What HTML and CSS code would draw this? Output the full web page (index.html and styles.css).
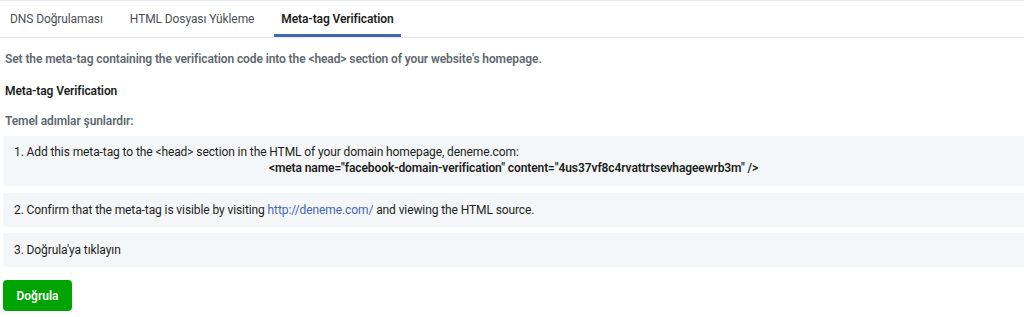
FILE: index.html
```html
<!DOCTYPE html>
<html lang="tr">
<head>
<meta charset="utf-8">
<link rel="stylesheet" href="styles.css">
</head>
<body>
<div class="page">
  <nav class="tabs">
    <div class="tab">DNS Doğrulaması</div>
    <div class="tab">HTML Dosyası Yükleme</div>
    <div class="tab active">Meta-tag Verification</div>
  </nav>
  <div class="content">
    <p class="intro">Set the meta-tag containing the verification code into the &lt;head&gt; section of your website's homepage.</p>
    <h3 class="title">Meta-tag Verification</h3>
    <p class="steps-label">Temel adımlar şunlardır:</p>
    <div class="step step-first">
      <div>1. Add this meta-tag to the &lt;head&gt; section in the HTML of your domain homepage, deneme.com:</div>
      <div class="code">&lt;meta name="facebook-domain-verification" content="4us37vf8c4rvattrtsevhageewrb3m" /&gt;</div>
    </div>
    <div class="step">2. Confirm that the meta-tag is visible by visiting <a class="link" href="#">http://deneme.com/</a> and viewing the HTML source.</div>
    <div class="step step-last">3. Doğrula'ya tıklayın</div>
    <button class="verify">Doğrula</button>
  </div>
</div>
</body>
</html>
```
FILE: styles.css
```css
* { box-sizing: border-box; }
body {
  margin: 0;
  font-family: Roboto, "Liberation Sans", Arial, sans-serif;
  font-size: 12px;
  color: #1c1e21;
  background: #fff;
}
.page {
  border-top: 1px solid #e9ebee;
}
.tabs {
  display: flex;
  gap: 13px;
  padding-left: 3px;
  border-bottom: 1px solid #e5e7ea;
  height: 37px;
}
.tab {
  padding: 0 7px;
  height: 36px;
  color: #4b4f56;
  font-size: 12px;
  letter-spacing: -0.1px;
  border-bottom: 3px solid transparent;
  line-height: 36px;
}
.tab.active {
  font-weight: 600;
  color: #1c1e21;
  border-bottom-color: #4267b2;
}
.content {
  padding-left: 3px;
  letter-spacing: -0.1px;
}
.intro, .steps-label {
  margin: 0;
  line-height: 16px;
  font-weight: 600;
  color: #606770;
}
.intro {
  margin-top: 13px;
  padding-left: 2px;
}
.title {
  margin: 16px 0 0;
  padding-left: 2px;
  font-size: 12px;
  line-height: 16px;
  font-weight: 600;
  color: #1c1e21;
}
.steps-label {
  margin-top: 14px;
  padding-left: 2px;
}
.step {
  background: #f5f6f7;
  padding: 9px 11px;
  line-height: 16px;
  margin-top: 6px;
}
.step-first {
  margin-top: 7px;
  padding: 8px 11px 10px;
}
.step + .step { margin-top: 7px; }
.step-last { margin-top: 6px !important; }
.code {
  text-align: center;
  font-weight: 600;
}
.link {
  color: #4267b2;
  text-decoration: none;
}
.verify {
  display: block;
  margin-top: 13px;
  width: 69px;
  height: 31px;
  border: none;
  border-radius: 4px;
  background: #00a400;
  color: #fff;
  font-family: inherit;
  font-size: 12px;
  font-weight: 600;
  letter-spacing: 0;
  padding: 0;
}
```
